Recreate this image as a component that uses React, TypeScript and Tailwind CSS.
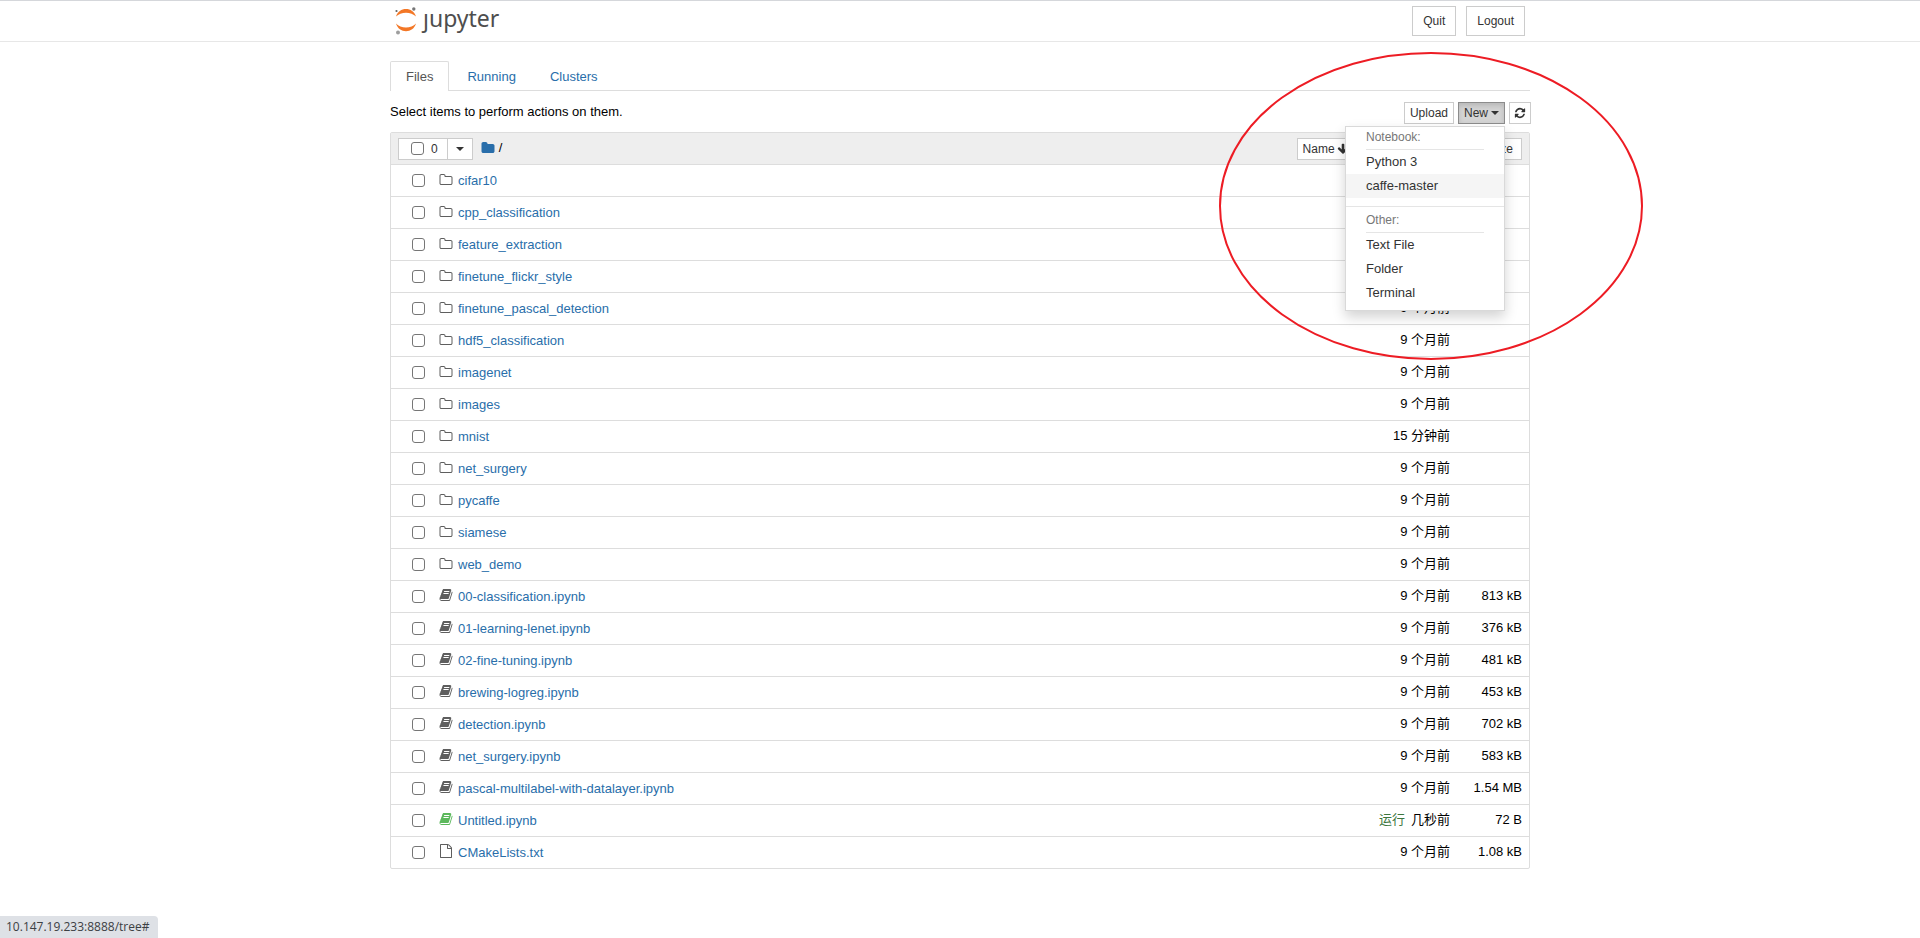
import { useState } from "react";

const files = [
  { name: "cifar10", type: "dir", modified: "9 个月前" },
  { name: "cpp_classification", type: "dir", modified: "9 个月前" },
  { name: "feature_extraction", type: "dir", modified: "9 个月前" },
  { name: "finetune_flickr_style", type: "dir", modified: "9 个月前" },
  { name: "finetune_pascal_detection", type: "dir", modified: "9 个月前" },
  { name: "hdf5_classification", type: "dir", modified: "9 个月前" },
  { name: "imagenet", type: "dir", modified: "9 个月前" },
  { name: "images", type: "dir", modified: "9 个月前" },
  { name: "mnist", type: "dir", modified: "15 分钟前" },
  { name: "net_surgery", type: "dir", modified: "9 个月前" },
  { name: "pycaffe", type: "dir", modified: "9 个月前" },
  { name: "siamese", type: "dir", modified: "9 个月前" },
  { name: "web_demo", type: "dir", modified: "9 个月前" },
  { name: "00-classification.ipynb", type: "notebook", modified: "9 个月前", size: "813 kB" },
  { name: "01-learning-lenet.ipynb", type: "notebook", modified: "9 个月前", size: "376 kB" },
  { name: "02-fine-tuning.ipynb", type: "notebook", modified: "9 个月前", size: "481 kB" },
  { name: "brewing-logreg.ipynb", type: "notebook", modified: "9 个月前", size: "453 kB" },
  { name: "detection.ipynb", type: "notebook", modified: "9 个月前", size: "702 kB" },
  { name: "net_surgery.ipynb", type: "notebook", modified: "9 个月前", size: "583 kB" },
  { name: "pascal-multilabel-with-datalayer.ipynb", type: "notebook", modified: "9 个月前", size: "1.54 MB" },
  { name: "Untitled.ipynb", type: "notebook", modified: "几秒前", size: "72 B", running: true },
  { name: "CMakeLists.txt", type: "file", modified: "9 个月前", size: "1.08 kB" },
];

const paths: Record<string, string> = {
  dir: "M1600 1312v-704q0-40-28-68t-68-28h-704q-40 0-68-28t-28-68v-64q0-40-28-68t-68-28h-320q-40 0-68 28t-28 68v960q0 40 28 68t68 28h1216q40 0 68-28t28-68zm128-704v704q0 92-66 158t-158 66h-1216q-92 0-158-66t-66-158v-960q0-92 66-158t158-66h320q92 0 158 66t66 158v32h672q92 0 158 66t66 158z",
  folder: "M1728 608v704q0 92-66 158t-158 66h-1216q-92 0-158-66t-66-158v-960q0-92 66-158t158-66h320q92 0 158 66t66 158v32h672q92 0 158 66t66 158z",
  notebook: "M1703 478q40 57 18 129l-275 906q-19 64-76.5 107.5t-122.5 43.5h-923q-77 0-148.5-53.5t-99.5-131.5q-24-67-2-127 0-4 3-27t4-37q1-8-3-21.5t-3-19.5q2-11 8-21t16.5-23.5 16.5-23.5q23-38 45-91.5t30-91.5q3-10 .5-30t-.5-28q3-11 17-28t17-23q21-36 42-92t25-90q1-9-2.5-32t.5-28q4-13 22-30.5t22-22.5q19-26 42.5-84.5t27.5-96.5q1-8-3-25.5t-2-26.5q2-8 9-18t18-23 17-21q8-12 16.5-30.5t15-35 16-36 19.5-32 26.5-23.5 36-11.5 47.5 5.5l-1 3q38-9 51-9h761q74 0 114 56t18 130l-274 906q-36 119-71.5 153.5t-128.5 34.5h-869q-27 0-38 15-11 16-1 43 24 70 144 70h923q29 0 56-15.5t35-41.5l300-987q7-22 5-57 38 15 59 43zm-1064 2q-4 13 2 22.5t20 9.5h608q13 0 25.5-9.5t16.5-22.5l21-64q4-13-2-22.5t-20-9.5h-608q-13 0-25.5 9.5t-16.5 22.5zm-83 256q-4 13 2 22.5t20 9.5h608q13 0 25.5-9.5t16.5-22.5l21-64q4-13-2-22.5t-20-9.5h-608q-13 0-25.5 9.5t-16.5 22.5z",
  file: "M1596 380q28 28 48 76t20 88v1152q0 40-28 68t-68 28h-1344q-40 0-68-28t-28-68v-1600q0-40 28-68t68-28h896q40 0 88 20t76 48zm-444-244v376h376q-10-29-22-41l-313-313q-12-12-41-22zm384 1528v-1024h-416q-40 0-68-28t-28-68v-416h-768v1536h1280z",
  refresh: "M1639 1056q0 5-1 7-64 268-268 434.5t-478 166.5q-146 0-282.5-55t-243.5-157l-129 129q-19 19-45 19t-45-19-19-45v-448q0-26 19-45t45-19h448q26 0 45 19t19 45-19 45l-137 137q71 66 161 102t187 36q134 0 250-65t186-179q11-17 53-117 8-23 30-23h192q13 0 22.5 9.5t9.5 22.5zm25-800v448q0 26-19 45t-45 19h-448q-26 0-45-19t-19-45 19-45l138-138q-148-137-349-137-134 0-250 65t-186 179q-11 17-53 117-8 23-30 23h-199q-13 0-22.5-9.5t-9.5-22.5v-7q65-268 270-434.5t480-166.5q146 0 284 55.5t245 156.5l130-129q19-19 45-19t45 19 19 45z",
  down: "M1675 832q0 53-37 90l-651 652q-39 37-91 37-53 0-90-37l-651-652q-38-36-38-90 0-53 38-91l74-75q39-37 91-37 53 0 90 37l294 294v-704q0-52 38-90t90-38h128q52 0 90 38t38 90v704l294-294q37-37 90-37 52 0 91 37l75 75q37 39 37 91z",
};

function Icon({ name, className }: { name: string; className?: string }) {
  return (
    <svg viewBox="0 0 1792 1792" fill="currentColor" aria-hidden="true" className={`shrink-0 ${className}`}>
      <path d={paths[name]} />
    </svg>
  );
}

function Caret() {
  return (
    <svg viewBox="0 0 8 4" fill="currentColor" aria-hidden="true" className="h-1 w-2 shrink-0">
      <path d="M0 0h8L4 4z" />
    </svg>
  );
}

const checkbox = "size-[13px] shrink-0 appearance-none rounded-[3px] border border-[#767676] bg-white checked:bg-blue-600";
const button = "flex h-[22px] items-center border border-[#ccc] bg-white text-xs text-[#333]";
const menuItem = "block h-6 w-full px-5 text-left leading-6 text-[#333] hover:bg-[#f5f5f5]";
const menuHeader = "mx-5 border-b border-[#e5e5e5] text-xs text-[#777]";

const iconStyle: Record<string, string> = {
  dir: "mb-[2px] text-[#5e5e5e]",
  notebook: "mb-1 text-[#5e5e5e]",
  file: "mb-1 text-[#5e5e5e]",
  running: "mb-1 text-[#5cb85c]",
};

function Logo() {
  return (
    <a href="#" aria-label="jupyter" className="flex items-center gap-[7px] text-[#4e4e4e]">
      <svg viewBox="0 0 22 28" aria-hidden="true" className="h-7 w-[22px]">
        <path fill="#f37726" d="M2 9.500C3.500 4.500 7.500 2 12 2s8.500 2.500 10 7.500C19.500 7 16 5.700 12 5.700S4.500 7 2 9.500z" />
        <path fill="#f37726" d="M2 16.500c2.500 2.700 6 4 10 4s7.500-1.300 10-4c-1.500 5-5.500 7.700-10 7.700s-8.500-2.700-10-7.700z" />
        <circle cx="19.800" cy="2" r="1.700" fill="#767677" />
        <circle cx="2.500" cy="4" r="1.100" fill="#616262" />
        <circle cx="4" cy="25.500" r="2" fill="#9e9e9e" />
      </svg>
      <span className="pb-[6px] font-['Noto_Sans',sans-serif] text-[23px] leading-7">ȷupyter</span>
    </a>
  );
}

function NewMenu() {
  return (
    <div className="absolute top-6 right-0 z-10 w-40 border border-black/15 bg-white pb-[5px] text-[13px] shadow-[0_6px_12px_rgba(0,0,0,0.175)]">
      <div className={`${menuHeader} h-[23px] leading-[20px]`}>Notebook:</div>
      <button className={menuItem}>Python 3</button>
      <button className={`${menuItem} bg-[#f5f5f5]`}>caffe-master</button>
      <div className="mt-2 border-t border-[#e5e5e5]" />
      <div className={`${menuHeader} h-[26px] leading-[26px]`}>Other:</div>
      <button className={menuItem}>Text File</button>
      <button className={menuItem}>Folder</button>
      <button className={menuItem}>Terminal</button>
    </div>
  );
}

export default function App() {
  const [open, setOpen] = useState(true);
  return (
    <div className="relative min-h-screen overflow-hidden bg-white font-['Liberation_Sans','Noto_Sans_CJK_SC',sans-serif] text-[13px] leading-5 text-black">
      <header className="border-t border-b border-t-[#d5d7db] border-b-[#e7e7e7]">
        <div className="mx-auto flex h-10 max-w-[1140px] items-center justify-between pr-[5px] pl-1">
          <Logo />
          <div className="flex gap-[10px]">
            <button className="h-[30px] border border-[#ccc] px-[10px] text-xs text-[#333]">Quit</button>
            <button className="h-[30px] border border-[#ccc] px-[10px] text-xs text-[#333]">Logout</button>
          </div>
        </div>
      </header>

      <main className="mx-auto max-w-[1140px] pt-[19px]">
        <nav className="flex h-[30px] border-b border-[#ddd]">
          <a href="#files" className="h-[30px] rounded-t-xs border border-b-0 border-[#ddd] bg-white px-[15px] leading-[30px] text-[#555]">Files</a>
          <a href="#running" className="ml-[2px] px-4 leading-[31px] text-[#296eaa]">Running</a>
          <a href="#clusters" className="ml-[2px] px-4 leading-[31px] text-[#296eaa]">Clusters</a>
        </nav>

        <div className="flex items-start justify-between pt-[11px] pb-2">
          <p>Select items to perform actions on them.</p>
          <div className="-mr-px flex gap-1">
            <button className={`${button} px-[5px]`}>Upload</button>
            <div className="relative">
              <button
                onClick={() => setOpen(!open)}
                className="flex h-[22px] items-center gap-[3px] border border-[#8c8c8c] bg-[#d4d4d4] px-[5px] text-xs text-[#333] shadow-[inset_0_3px_5px_rgba(0,0,0,0.125)]"
              >
                New <Caret />
              </button>
              {open && <NewMenu />}
            </div>
            <button aria-label="Refresh" className={`${button} px-1`}>
              <Icon name="refresh" className="size-3" />
            </button>
          </div>
        </div>

        <div className="rounded-xs border border-[#ddd]">
          <div className="flex h-[31px] items-center bg-[#eee] px-[7px]">
            <label className={`${button} gap-[7px] pr-[9px] pl-3`}>
              <input type="checkbox" className={checkbox} />0
            </label>
            <button aria-label="Select" className={`${button} -ml-px px-2`}>
              <Caret />
            </button>
            <a href="#tree" aria-label="Home" className="ml-2 text-[#296eaa]">
              <Icon name="folder" className="mb-[2px] size-[14px]" />
            </a>
            <span className="ml-1 pb-[2px]">/</span>
            <div className="ml-auto flex">
              <button className={`${button} gap-[2px] px-[5px]`}>
                Name <Icon name="down" className="size-3" />
              </button>
              <button className={`${button} ml-1 px-[5px]`}>Last Modified</button>
              <button className={`${button} w-20 justify-end px-2`}>File size</button>
            </div>
          </div>

          {files.map((f) => (
            <div key={f.name} className="flex h-8 items-center border-t border-[#ddd] pr-[7px] pl-[21px]">
              <input type="checkbox" aria-label={f.name} className={checkbox} />
              <Icon name={f.type} className={`ml-[14px] size-[14px] ${iconStyle[f.running ? "running" : f.type]}`} />
              <a href="#tree" className="ml-[5px] text-[#296eaa]">{f.name}</a>
              <div className="ml-auto flex gap-[6px] pb-[2px]">
                {f.running && <span className="text-[#3c763d]">运行</span>}
                <span>{f.modified}</span>
              </div>
              <span className="w-18 pb-[2px] text-right">{f.size}</span>
            </div>
          ))}
        </div>
      </main>

      {/* hand-drawn marker around the New menu */}
      <svg viewBox="0 0 424 309" aria-hidden="true" className="pointer-events-none absolute top-[52px] left-1/2 z-20 ml-[259px] h-[309px] w-[424px]">
        <ellipse cx="212" cy="154" rx="211" ry="153" fill="none" stroke="#ed1c24" strokeWidth="2" />
      </svg>

      <div className="fixed bottom-0 left-0 h-[22px] rounded-tr-sm bg-[#dee1e6] pr-[9px] pl-[6px] font-['Open_Sans',sans-serif] text-xs leading-[22px] text-[#3c4043]">
        10.147.19.233:8888/tree#
      </div>
    </div>
  );
}
